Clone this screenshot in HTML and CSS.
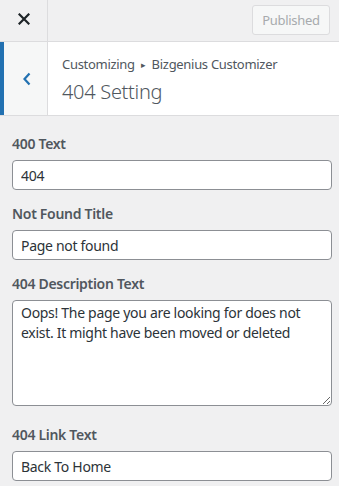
FILE: index.html
```html
<!DOCTYPE html>
<html lang="en">
<head>
    <meta charset="UTF-8">
    <meta name="viewport" content="width=device-width, initial-scale=1.0">
    <title>404 Setting</title>
    <link rel="stylesheet" href="styles.css">
</head>
<body>
    <div class="topbar">
        <button class="close" type="button" aria-label="Close">
            <svg width="12" height="12" viewBox="0 0 12 12">
                <path d="M1.5 1.5 L10.5 10.5 M10.5 1.5 L1.5 10.5" stroke="#1d2327" stroke-width="2.2" stroke-linecap="square"/>
            </svg>
        </button>
        <div class="actions">
            <button class="published" type="button" disabled>Published</button>
        </div>
    </div>

    <div class="section-head">
        <button class="back" type="button" aria-label="Back">
            <svg width="10" height="14" viewBox="0 0 10 14">
                <path d="M7.5 1.5 L2.5 7 L7.5 12.5" fill="none" stroke="#2271b1" stroke-width="2.2"/>
            </svg>
        </button>
        <div class="title">
            <span class="crumb">Customizing <span class="arrow">&#9656;</span> Bizgenius Customizer</span>
            <h3>404 Setting</h3>
        </div>
    </div>

    <form class="controls">
        <label for="text400">400 Text</label>
        <input type="text" id="text400" value="404">

        <label for="nfTitle">Not Found Title</label>
        <input type="text" id="nfTitle" value="Page not found">

        <label for="desc">404 Description Text</label>
        <textarea id="desc">Oops! The page you are looking for does not exist. It might have been moved or deleted</textarea>

        <label for="linkText">404 Link Text</label>
        <input type="text" id="linkText" value="Back To Home">
    </form>
</body>
</html>
```

FILE: styles.css
```css
body {
    margin: 0;
    background: #f0f0f1;
    font-family: "Noto Sans", "Open Sans", sans-serif;
    letter-spacing: -0.3px;
    color: #50575e;
}

button {
    font-family: inherit;
    letter-spacing: inherit;
}

.topbar {
    display: flex;
    height: 41px;
    border-bottom: 1px solid #dcdcde;
}

.close {
    width: 48px;
    border: 0;
    border-right: 1px solid #dcdcde;
    background: transparent;
    display: flex;
    align-items: center;
    justify-content: center;
    padding: 0 0 3px;
}

.actions {
    flex: 1;
    display: flex;
    justify-content: flex-end;
    align-items: flex-start;
    padding: 5px 9px 0 0;
}

.published {
    width: 78px;
    height: 30px;
    border: 1px solid #dcdcde;
    border-radius: 3px;
    background: #f6f7f7;
    color: #a7aaad;
    font-size: 13px;
    padding: 0;
}

.section-head {
    display: flex;
    height: 73px;
    background: #fff;
    border-bottom: 1px solid #dcdcde;
}

.back {
    width: 48px;
    border: 0;
    border-left: 4px solid #2271b1;
    border-right: 1px solid #dcdcde;
    background: #f6f7f7;
    display: flex;
    align-items: center;
    justify-content: center;
    padding: 0 0 0 2px;
}

.title {
    padding: 12px 0 0 14px;
}

.crumb {
    display: block;
    font-size: 13px;
    line-height: 20px;
    color: #50575e;
}

.arrow {
    font-size: 9px;
    vertical-align: 1px;
    margin: 0 3px;
}

.title h3 {
    margin: 3px 0 0;
    font-size: 20px;
    font-weight: 300;
    line-height: 27px;
    color: #50575e;
}

.controls {
    display: flex;
    flex-direction: column;
    padding: 18px 7px 0 12px;
}

label {
    font-size: 14px;
    font-weight: 600;
    line-height: 20px;
    margin-bottom: 6px;
    color: #50575e;
}

input, textarea {
    box-sizing: border-box;
    width: 100%;
    border: 1px solid #8c8f94;
    border-radius: 4px;
    background: #fff;
    color: #2c3338;
    font-family: inherit;
    letter-spacing: inherit;
    font-size: 14px;
    margin: 0 0 14px;
}

input {
    height: 30px;
    padding: 0 8px;
}

textarea {
    height: 106px;
    padding: 2px 8px;
    line-height: 20px;
    resize: vertical;
    margin-bottom: 19px;
}
```
